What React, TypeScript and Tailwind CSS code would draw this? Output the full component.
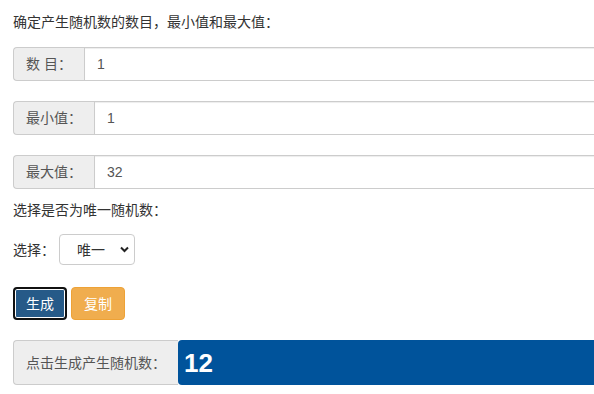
import { useState } from "react"

const font = "font-['Liberation_Sans','Noto_Sans_CJK_SC',sans-serif]"

function Field({ label, value }: { label: string; value: string }) {
    return (
        <div className="flex h-[34px] w-[720px]">
            <span className="flex items-center whitespace-pre px-3 bg-[#eeeeee] border border-[#cccccc] border-r-0 rounded-l text-[#555555] text-sm">
                {label}
            </span>
            <input
                className="flex-1 h-full px-3 border border-[#cccccc] text-[#555555] text-sm outline-none shadow-[inset_0_1px_1px_rgba(0,0,0,0.075)]"
                defaultValue={value}
            />
        </div>
    )
}

export default function App() {
    const [unique, setUnique] = useState("唯一")

    return (
        <div className={`w-[594px] h-[394px] overflow-hidden bg-white text-[#333333] text-sm leading-5 pl-[13px] pt-3 ${font}`}>
            <p>确定产生随机数的数目，最小值和最大值：</p>
            <div className="flex flex-col gap-5 mt-[15px]">
                <Field label="数 目：" value="1" />
                <Field label="最小值：" value="1" />
                <Field label="最大值：" value="32" />
            </div>
            <p className="mt-[11px]">选择是否为唯一随机数：</p>
            <div className="flex items-center mt-[14px] gap-1">
                <span>选择：</span>
                <div className="relative w-[76px] h-[31px]">
                    <select
                        value={unique}
                        onChange={e => setUnique(e.target.value)}
                        className="appearance-none w-full h-full pl-[17px] border border-[#cccccc] rounded bg-white text-[#333333] text-sm outline-none"
                    >
                        <option>唯一</option>
                        <option>不唯一</option>
                    </select>
                    <svg className="absolute right-[6px] top-[12px] pointer-events-none" width="9" height="7" viewBox="0 0 9 7">
                        <path d="M1 1.5 L4.5 5 L8 1.5" stroke="#222" strokeWidth="2" fill="none" />
                    </svg>
                </div>
            </div>
            <div className="flex gap-1 mt-[22px]">
                <button className="h-[33px] w-[54px] rounded border-2 border-[#111111] bg-[#265a88] text-white text-sm shadow-[inset_0_0_0_1px_#ffffff]">
                    生成
                </button>
                <button className="h-[33px] w-[54px] rounded border border-[#eea236] bg-[#f0ad4e] text-white text-sm">
                    复制
                </button>
            </div>
            <div className="flex h-[45px] w-[720px] mt-5">
                <span className="flex items-center px-3 bg-[#eeeeee] border border-[#cccccc] border-r-0 rounded-l text-[#555555] text-sm">
                    点击生成产生随机数：
                </span>
                <div className="flex-1 flex items-center pl-[6px] bg-[#00539b] rounded-l text-white text-[26px] font-bold">
                    12
                </div>
            </div>
        </div>
    )
}
